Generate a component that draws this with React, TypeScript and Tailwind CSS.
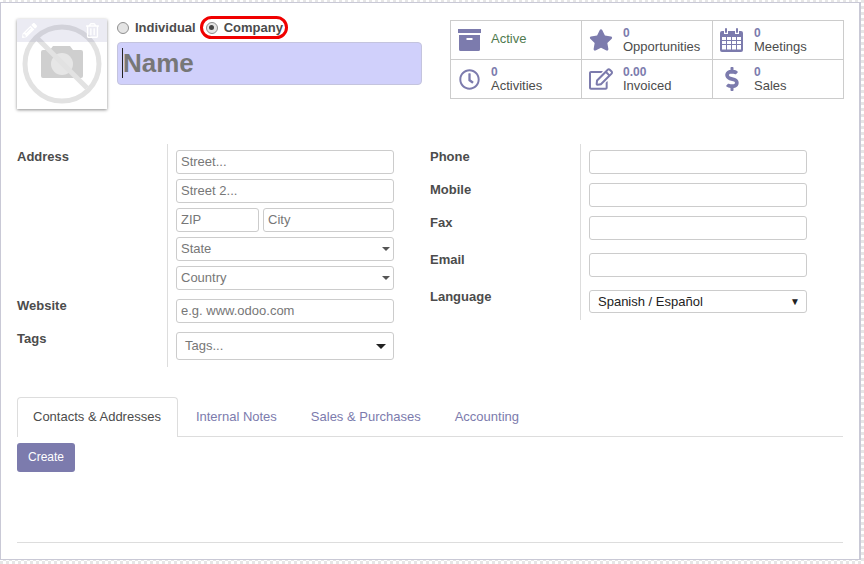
import React from 'react';
import { FaDollarSign, FaPencilAlt, FaRegClock, FaRegEdit, FaRegTrashAlt, FaStar } from 'react-icons/fa';

const inputClass =
  'block h-[24px] w-full rounded-[3px] border border-[#ccc] bg-white px-[4px] pb-[2px] text-[13px] text-[#4c4c4c] outline-none placeholder:text-[#777]';

function Caret({ dark }: { dark?: boolean }) {
  return dark ? (
    <svg width="10" height="5" viewBox="0 0 10 5" className="shrink-0">
      <path d="M0 0h10L5 5z" fill="#222" />
    </svg>
  ) : (
    <svg width="8" height="4" viewBox="0 0 8 4" className="shrink-0">
      <path d="M0 0h8L4 4z" fill="#555" />
    </svg>
  );
}

function PlaceholderSelect({ label }: { label: string }) {
  return (
    <div className="flex h-[24px] items-center justify-between rounded-[3px] border border-[#ccc] bg-white pl-[4px] pr-[3px] text-[13px] text-[#777]">
      <span>{label}</span>
      <Caret />
    </div>
  );
}

function ArchiveIcon() {
  return (
    <svg width="23" height="22" viewBox="0 0 23 22">
      <path d="M0 0h23v4H0z" fill="#7c7bad" />
      <path fillRule="evenodd" d="M1 6h21v14.5a1.5 1.5 0 0 1-1.5 1.5h-18A1.5 1.5 0 0 1 1 20.500zM8.500 9v2h6V9z" fill="#7c7bad" />
    </svg>
  );
}

function CalendarIcon() {
  return (
    <svg width="23" height="24" viewBox="0 0 23 24">
      <path
        fillRule="evenodd"
        fill="#7c7bad"
        d="M2 3h2v3h4V3h7v3h4V3h2a2 2 0 0 1 2 2v17a2 2 0 0 1-2 2H2a2 2 0 0 1-2-2V5a2 2 0 0 1 2-2zM2 9v3h4V9zm5 0v3h4V9zm5 0v3h4V9zm5 0v3h4V9zM2 13v3h4v-3zm5 0v3h4v-3zm5 0v3h4v-3zm5 0v3h4v-3zM2 17v4.500h4V17zm5 0v4.500h4V17zm5 0v4.500h4V17zm5 0v4.500h4V17z"
      />
      <rect x="5" y="0" width="2" height="5" rx="1" fill="#7c7bad" />
      <rect x="16" y="0" width="2" height="5" rx="1" fill="#7c7bad" />
    </svg>
  );
}

function ClockIcon() {
  return <FaRegClock size={21} color="#7c7bad" />;
}

function StatCell({ icon, value, label, active, shift }: { icon: React.ReactNode; value?: string; label: string; active?: boolean; shift?: boolean }) {
  return (
    <div
      className={
        active
          ? 'flex h-[39px] items-center border-r border-b border-[#ccc] shadow-[0_-1px_0_#ccc]'
          : 'flex h-[39px] items-center border-r border-b border-[#ccc]'
      }
    >
      <div className={shift ? 'flex w-[41px] shrink-0 justify-center pr-[4px]' : 'flex w-[40px] shrink-0 justify-center pr-[3px]'}>{icon}</div>
      {active ? (
        <span className="pb-[2px] text-[13px] text-[#4f7a4f]">{label}</span>
      ) : (
        <div className="text-[13px] leading-[14px] text-[#4c4c4c]">
          <div className="text-[12px] font-bold leading-[13px] text-[#7c7bad]">{value}</div>
          <div>{label}</div>
        </div>
      )}
    </div>
  );
}

function Photo() {
  return (
    <div className="relative h-[90px] w-[90px] shrink-0 bg-white shadow-[0_1px_3px_rgba(0,0,0,0.45)]">
      <svg width="90" height="90" viewBox="0 0 90 90">
        <circle cx="45" cy="45" r="37" fill="none" stroke="#e2e2e2" strokeWidth="5" />
        <path d="M26 31h7l3-4h17l3 4h8a2 2 0 0 1 2 2v24a2 2 0 0 1-2 2H26a2 2 0 0 1-2-2V33a2 2 0 0 1 2-2z" fill="#cfcfcf" />
        <circle cx="45" cy="45" r="11" fill="#e6e6e6" />
        <path d="M19 18l51 51" stroke="#e2e2e2" strokeWidth="5" />
      </svg>
      {/* edit/delete overlay on the picture */}
      <div className="absolute inset-x-0 top-0 flex h-[23px] items-center justify-between bg-[#7c7bad]/15 pl-[5px] pr-[7px]">
        <FaPencilAlt size={15} color="#fff" />
        <FaRegTrashAlt size={15} color="#fff" />
      </div>
    </div>
  );
}

function Radio({ checked }: { checked?: boolean }) {
  return (
    <span className="flex h-[12px] w-[12px] shrink-0 items-center justify-center rounded-full border border-[#8f8f8f] bg-[#e4e4e4]">
      {checked && <span className="h-[5px] w-[5px] rounded-full bg-[#444]" />}
    </span>
  );
}

export default function App() {
  return (
    <div
      className="h-[564px] w-[864px] overflow-hidden bg-[conic-gradient(#e6e6e6_25%,#fff_0_50%,#e6e6e6_0_75%,#fff_0)] bg-[length:6px_6px] pb-[4px] pr-[3px] pt-[2px]"
      style={{ fontFamily: '"Liberation Sans", Arial, sans-serif' }}
    >
      <div className="h-full border border-r-2 border-[#c9c9d6] bg-white pl-[16px] pr-[16px]">
        {/* header */}
        <div className="flex pt-[16px]">
          <Photo />
          <div className="-mt-[3px] ml-[10px] w-[305px] shrink-0">
            <div className="flex h-[23px] items-center text-[13px] font-bold text-[#4c4c4c]">
              <Radio />
              <span className="ml-[6px]">Individual</span>
              <div className="ml-[4px] flex h-[23px] w-[88px] items-center rounded-full border-[3px] border-[#f00000] pl-[3px]">
                <Radio checked />
                <span className="ml-[6px]">Company</span>
              </div>
            </div>
            <div className="mt-[3px] flex h-[43px] items-center rounded-[4px] border border-[#c4c4de] bg-[#d0d0fb] pb-[1px] pl-[4px] text-[26px] font-bold text-[#777]">
              <span className="border-l border-[#222] leading-[30px]">Name</span>
            </div>
          </div>
          <div className="ml-[28px] mt-[1px] grid h-[79px] w-[394px] shrink-0 grid-cols-[131px_131px_131px] border-l border-t border-[#ccc]">
            <StatCell active icon={<ArchiveIcon />} label="Active" />
            <StatCell shift icon={<FaStar size={24} color="#7c7bad" />} value="0" label="Opportunities" />
            <StatCell shift icon={<CalendarIcon />} value="0" label="Meetings" />
            <StatCell icon={<ClockIcon />} value="0" label="Activities" />
            <StatCell shift icon={<FaRegEdit size={24} color="#7c7bad" />} value="0.00" label="Invoiced" />
            <StatCell shift icon={<FaDollarSign size={24} color="#7c7bad" />} value="0" label="Sales" />
          </div>
        </div>

        {/* form */}
        <div className="mt-[35px] flex items-start text-[13px]">
          <div className="flex w-[413px]">
            <div className="w-[150px] font-bold leading-[16px] text-[#4c4c4c]">
              <div className="mt-[5px]">Address</div>
              <div className="mt-[133px]">Website</div>
              <div className="mt-[17px]">Tags</div>
            </div>
            <div className="flex h-[223px] w-[227px] flex-col gap-[5px] border-l border-[#ddd] pl-[8px] pt-[6px]">
              <input className={inputClass} placeholder="Street..." />
              <input className={inputClass} placeholder="Street 2..." />
              <div className="flex gap-[4px]">
                <input className={`${inputClass} !w-[83px]`} placeholder="ZIP" />
                <input className={`${inputClass} !w-[131px]`} placeholder="City" />
              </div>
              <PlaceholderSelect label="State" />
              <PlaceholderSelect label="Country" />
              <input className={`${inputClass} mt-[4px]`} placeholder="e.g. www.odoo.com" />
              <div className="mt-[4px] flex h-[28px] items-center justify-between rounded-[3px] border border-[#ccc] bg-white pl-[8px] pr-[7px] text-[#777]">
                <span>Tags...</span>
                <Caret dark />
              </div>
            </div>
          </div>
          <div className="flex">
            <div className="w-[150px] font-bold leading-[16px] text-[#4c4c4c]">
              <div className="mt-[5px]">Phone</div>
              <div className="mt-[17px]">Mobile</div>
              <div className="mt-[17px]">Fax</div>
              <div className="mt-[21px]">Email</div>
              <div className="mt-[21px]">Language</div>
            </div>
            <div className="h-[176px] w-[227px] border-l border-[#ddd] pl-[8px] pt-[6px]">
              <input className={inputClass} />
              <input className={`${inputClass} mt-[9px]`} />
              <input className={`${inputClass} mt-[9px]`} />
              <input className={`${inputClass} mt-[13px]`} />
              <div className="mt-[13px] flex h-[23px] items-center justify-between rounded-[3px] border border-[#ccc] bg-white pl-[8px] pr-[6px] text-[#222]">
                <span>Spanish / Español</span>
                <span className="text-[10px] leading-none">▼</span>
              </div>
            </div>
          </div>
        </div>

        {/* tabs */}
        <div className="mt-[30px] flex h-[40px] border-b border-[#ddd] text-[13px]">
          <div className="flex h-[40px] items-center rounded-t-[4px] border border-b-0 border-[#ddd] bg-white pb-[2px] pl-[15px] pr-[16px] text-[#4c4c4c]">
            Contacts &amp; Addresses
          </div>
          <div className="flex h-[39px] items-center pl-[18px] pr-[17px] text-[#7c7bad]">Internal Notes</div>
          <div className="flex h-[39px] items-center px-[17px] text-[#7c7bad]">Sales &amp; Purchases</div>
          <div className="flex h-[39px] items-center px-[17px] text-[#7c7bad]">Accounting</div>
        </div>
        <button className="mt-[6px] block h-[29px] w-[58px] rounded-[3px] bg-[#7c7bad] pb-[2px] text-center text-[12px] text-white">Create</button>
        <div className="mt-[70px] h-[1px] bg-[#ddd]" />
      </div>
    </div>
  );
}
